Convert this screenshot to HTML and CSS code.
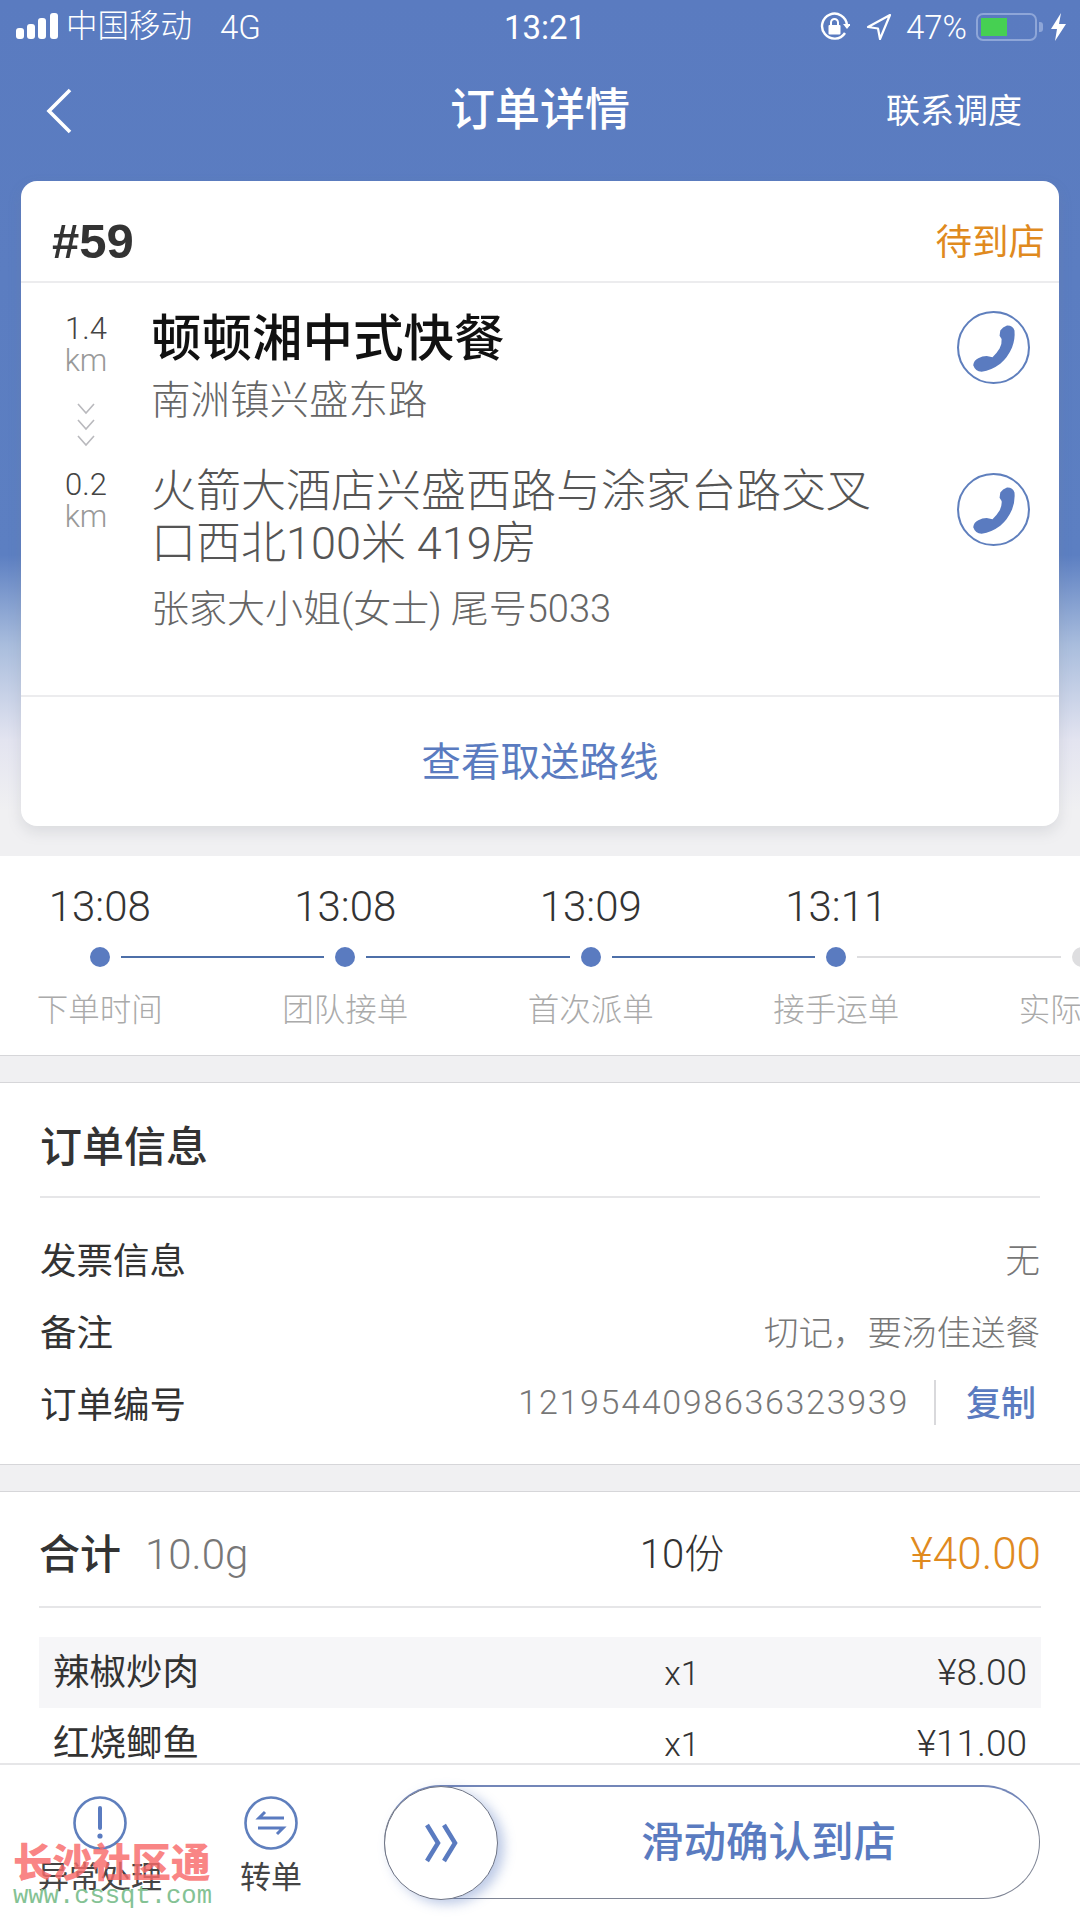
FILE: index.html
```html
<!DOCTYPE html>
<html lang="zh">
<head>
<meta charset="utf-8">
<title>订单详情</title>
<link rel="stylesheet" href="styles.css">
</head>
<body>
<div class="page">
  <main class="scroll">
    <div class="status">
      <div class="status-left">
        <svg class="signal" width="44" height="28" viewBox="0 0 44 28"><rect x="0" y="15" width="8" height="11" rx="3"/><rect x="11" y="11" width="8" height="15" rx="3"/><rect x="22" y="5" width="8" height="21" rx="3"/><rect x="34" y="0" width="8" height="26" rx="3"/></svg>
        <span class="carrier">中国移动</span>
        <span class="net">4G</span>
      </div>
      <div class="clock">13:21</div>
      <div class="status-right">
        <svg class="s-lock" width="30" height="30" viewBox="0 0 30 30"><path d="M25 21A12.5 12.5 0 1 1 27 13" fill="none" stroke="#fff" stroke-width="2.4"/><path d="M23 12h8l-4 5z" fill="#fff"/><rect x="8.5" y="13" width="12" height="9.5" rx="1" fill="#fff"/><path d="M11 13v-2.5a3.5 3.5 0 0 1 7 0V13" fill="none" stroke="#fff" stroke-width="2"/></svg>
        <svg class="s-nav" width="26" height="28" viewBox="0 0 26 28"><path d="M24 2L2 14l10 1.5L14 26z" fill="none" stroke="#fff" stroke-width="2.2" stroke-linejoin="round"/></svg>
        <span class="pct">47%</span>
        <span class="battery"><span class="battery-fill"></span></span>
        <span class="battery-nub"></span>
        <svg class="s-bolt" width="15" height="28" viewBox="0 0 15 28"><path d="M10 0L0 16h6l-2 12 11-17H8z" fill="#fff"/></svg>
      </div>
    </div>

    <header class="nav">
      <svg class="back" width="26" height="46" viewBox="0 0 26 46"><path d="M24 2L3 23l21 21" fill="none" stroke="#fff" stroke-width="3.6"/></svg>
      <h1 class="nav-title">订单详情</h1>
      <div class="nav-action">联系调度</div>
    </header>

    <section class="card">
      <div class="card-head">
        <span class="order-no">#59</span>
        <span class="order-state">待到店</span>
      </div>
      <div class="card-body">
        <div class="stop stop-shop">
          <div class="dist">
            <div class="dist-num">1.4</div>
            <div class="dist-unit">km</div>
            <svg class="chev" width="20" height="46" viewBox="0 0 20 46"><path d="M2 2l8 9 8-9M2 18l8 9 8-9M2 34l8 9 8-9" fill="none" stroke="#b9b9bd" stroke-width="1.6"/></svg>
          </div>
          <div class="stop-text">
            <div class="shop-name">顿顿湘中式快餐</div>
            <div class="shop-addr">南洲镇兴盛东路</div>
          </div>
          <svg class="phone" width="73" height="73" viewBox="0 0 72 72"><circle cx="36" cy="36" r="35" fill="#fff" stroke="#5f7fbd" stroke-width="2"/><path d="M42.7 19.3Q45 15.500 49.300 14.300Q55 14 56.700 19.300Q57.500 28 54.300 36Q50 46 42.700 52Q34 58.500 24.300 60Q18 59.500 16 53.500Q16.500 48.500 21 46.500Q25 44.300 29.300 44.300L35 45.500Q39 42 42 37Q44.500 32 44 27.500L42 24.300z" fill="#5a7bc0"/></svg>
        </div>
        <div class="stop stop-dest">
          <div class="dist">
            <div class="dist-num">0.2</div>
            <div class="dist-unit">km</div>
          </div>
          <div class="stop-text">
            <div class="dest-addr">火箭大酒店兴盛西路与涂家台路交叉口西北100米 419房</div>
            <div class="dest-who">张家大小姐(女士) 尾号5033</div>
          </div>
          <svg class="phone" width="73" height="73" viewBox="0 0 72 72"><circle cx="36" cy="36" r="35" fill="#fff" stroke="#5f7fbd" stroke-width="2"/><path d="M42.7 19.3Q45 15.500 49.300 14.300Q55 14 56.700 19.300Q57.500 28 54.300 36Q50 46 42.700 52Q34 58.500 24.300 60Q18 59.500 16 53.500Q16.500 48.500 21 46.500Q25 44.300 29.300 44.300L35 45.500Q39 42 42 37Q44.500 32 44 27.500L42 24.300z" fill="#5a7bc0"/></svg>
        </div>
      </div>
      <div class="card-foot">查看取送路线</div>
    </section>

    <section class="timeline">
      <div class="track">
        <div class="step first"><div class="t">13:08</div><div class="dotrow"><i class="seg"></i><b class="dot"></b><i class="seg"></i></div><div class="l">下单时间</div></div>
        <div class="step"><div class="t">13:08</div><div class="dotrow"><i class="seg"></i><b class="dot"></b><i class="seg"></i></div><div class="l">团队接单</div></div>
        <div class="step"><div class="t">13:09</div><div class="dotrow"><i class="seg"></i><b class="dot"></b><i class="seg"></i></div><div class="l">首次派单</div></div>
        <div class="step current"><div class="t">13:11</div><div class="dotrow"><i class="seg"></i><b class="dot"></b><i class="seg off"></i></div><div class="l">接手运单</div></div>
        <div class="step pending"><div class="t">&nbsp;</div><div class="dotrow"><i class="seg off"></i><b class="dot off"></b><i class="seg off"></i></div><div class="l">实际到店</div></div>
      </div>
    </section>

    <section class="info">
      <h2 class="info-title">订单信息</h2>
      <div class="info-rows">
        <div class="row"><span class="key">发票信息</span><span class="val">无</span></div>
        <div class="row"><span class="key">备注</span><span class="val">切记，要汤佳送餐</span></div>
        <div class="row"><span class="key">订单编号</span><span class="order-id"><span class="val num">1219544098636323939</span><span class="copy">复制</span></span></div>
      </div>
    </section>

    <section class="goods">
      <div class="total">
        <span class="total-left"><span class="total-key">合计</span><span class="total-weight">10.0g</span></span>
        <span class="total-count">10份</span>
        <span class="total-price">¥40.00</span>
      </div>
      <div class="item alt"><span class="item-name">辣椒炒肉</span><span class="qty">x1</span><span class="price">¥8.00</span></div>
      <div class="item"><span class="item-name">红烧鲫鱼</span><span class="qty">x1</span><span class="price">¥11.00</span></div>
    </section>
  </main>

  <footer class="bar">
    <div class="tool">
      <svg width="54" height="54" viewBox="0 0 54 54"><circle cx="27" cy="27" r="25.500" fill="none" stroke="#5f7fbd" stroke-width="2.600"/><path d="M27 12v20" stroke="#5a7bc0" stroke-width="4" stroke-linecap="round"/><circle cx="27" cy="40" r="2.600" fill="#5a7bc0"/></svg>
      <span class="tool-label">异常处理</span>
    </div>
    <div class="tool">
      <svg width="54" height="54" viewBox="0 0 54 54"><circle cx="27" cy="27" r="25.500" fill="none" stroke="#5f7fbd" stroke-width="2.600"/><path d="M21 16l-6 6h25M33 38l6-6H14" fill="none" stroke="#5a7bc0" stroke-width="3"/></svg>
      <span class="tool-label">转单</span>
    </div>
    <div class="slider">
      <div class="knob"><svg width="34" height="40" viewBox="0 0 34 40"><path d="M3 2l11 18L3 38M20 2l11 18-11 18" fill="none" stroke="#5a7bc0" stroke-width="4.500"/></svg></div>
      <div class="slider-text">滑动确认到店</div>
    </div>
  </footer>

  <div class="mark">
    <div class="mark-cn">长沙社区通</div>
    <div class="mark-url">www.cssqt.com</div>
  </div>
</div>
</body>
</html>
```
FILE: styles.css
```css
* { box-sizing: border-box; }
html, body { margin: 0; padding: 0; }
body {
  width: 1080px;
  height: 1920px;
  font-family: "Roboto", "Noto Sans CJK SC", sans-serif;
  color: #333;
}
.page {
  position: relative;
  width: 1080px;
  height: 1920px;
  overflow: hidden;
  display: flex;
  flex-direction: column;
  background: #f0f0f2;
}
.scroll {
  flex: 1;
  min-height: 0;
  overflow: hidden;
  background: linear-gradient(180deg, #5a7bc0 0, #5c7fc2 555px, #a9bddd 645px, #e3e4f0 740px, #f0f0f2 810px);
}

/* status bar */
.status {
  height: 54px;
  display: grid;
  grid-template-columns: 1fr auto 1fr;
  align-items: center;
  color: #fff;
  font-size: 30px;
  padding: 0 14px 0 16px;
}
.status-left, .status-right { display: flex; align-items: center; }
.status-right { justify-content: flex-end; }
.signal { fill: #fff; margin-right: 6px; }
.carrier { font-size: 31.500px; line-height: 40px; font-weight: 300; }
.net { margin-left: 28px; font-size: 33px; font-weight: 300; }
.clock { font-size: 33px; font-weight: 400; margin-left: 8px; }
.s-lock { margin-right: 16px; }
.s-nav { margin-right: 14px; }
.pct { font-size: 33px; font-weight: 300; margin-right: 9px; }
.battery {
  width: 61px;
  height: 28px;
  border: 2.500px solid #8ea6d8;
  border-radius: 7px;
  padding: 3px;
  display: block;
}
.battery-fill { display: block; width: 26px; height: 100%; background: #46d052; }
.battery-nub { width: 4px; height: 10px; background: #8ea6d8; margin: 0 8px 0 2px; border-radius: 0 3px 3px 0; }

/* nav */
.nav {
  height: 127px;
  padding: 0 58px 14px;
  display: grid;
  grid-template-columns: 1fr auto 1fr;
  align-items: center;
  color: #fff;
}
.back { margin-left: -12px; }
.nav-title { margin: 0; font-size: 45px; line-height: 60px; font-weight: 500; }
.nav-action { justify-self: end; font-size: 34px; line-height: 46px; font-weight: 400; }

/* card */
.card {
  margin: 0 21px;
  height: 645px;
  background: #fff;
  border-radius: 16px;
  box-shadow: 0 6px 14px rgba(120, 125, 140, .18);
  display: flex;
  flex-direction: column;
  overflow: hidden;
}
.card-head {
  height: 102px;
  flex: none;
  display: flex;
  justify-content: space-between;
  align-items: center;
  padding: 20px 14px 0 31px;
  border-bottom: 2px solid #ececee;
}
.order-no { font-size: 49px; font-weight: 700; color: #333; font-family: "Liberation Sans", "Noto Sans CJK SC", sans-serif; }
.order-state { font-size: 36.500px; color: #e08a1e; margin-bottom: 4px; }
.card-body { flex: 1; min-height: 0; padding-top: 23px; }
.stop {
  display: grid;
  grid-template-columns: 130px 1fr 73px;
  padding-right: 29px;
}
.stop-shop { height: 160px; }
.stop-text { padding-top: 3px; }
.stop-dest .stop-text { padding-top: 0; }
.dist { width: 130px; display: flex; flex-direction: column; align-items: center; }
.stop-shop .dist { padding-top: 7px; }
.stop-dest .dist { padding-top: 3px; }
.dist-num { font-size: 31px; line-height: 32px; font-weight: 300; color: #444; }
.dist-unit { font-size: 31px; line-height: 32px; font-weight: 300; color: #999; }
.chev { margin-top: 25px; }
.stop-shop .phone { margin-top: 5px; }
.stop-dest .phone { margin-top: 7px; }
.shop-name { font-size: 50.500px; line-height: 60px; font-weight: 500; color: #111; }
.shop-addr { margin-top: 7px; font-size: 39.500px; line-height: 50px; color: #666; font-weight: 300; }
.dest-addr { max-width: 730px; font-size: 45px; line-height: 52px; color: #555; font-weight: 300; }
.dest-who { margin-top: 14px; font-size: 38px; line-height: 50px; color: #666; font-weight: 300; }
.card-foot {
  flex: none;
  height: 131px;
  padding-bottom: 7px;
  border-top: 2px solid #ececee;
  display: flex;
  align-items: center;
  justify-content: center;
  font-size: 39.500px;
  color: #5a7bc0;
}

/* timeline */
.timeline {
  margin-top: 30px;
  height: 200px;
  background: #fff;
  border-bottom: 1px solid #d6d6d9;
  overflow: hidden;
}
.track { display: flex; margin-left: -23px; padding-top: 28px; width: 1300px; }
.step { flex: none; width: 245.500px; display: flex; flex-direction: column; align-items: center; }
.t { font-size: 42px; line-height: 46px; color: #333; font-weight: 300; }
.dotrow {
  width: 100%;
  height: 20px;
  margin-top: 17px;
  display: grid;
  grid-template-columns: 1fr 20px 1fr;
  column-gap: 11px;
  align-items: center;
}
.seg { height: 2.500px; background: #4d6fa8; }
.seg.off { background: #dedee0; }
.first .seg:first-child { background: transparent; }
.dot { width: 20px; height: 20px; border-radius: 50%; background: #5a7bc0; }
.dot.off { background: #dedee0; }
.l { margin-top: 24px; font-size: 31.500px; line-height: 40px; color: #aaa; font-weight: 300; white-space: nowrap; }

/* info */
.info {
  margin-top: 26px;
  height: 383px;
  padding: 0 40px;
  background: #fff;
  border-top: 1px solid #d6d6d9;
  border-bottom: 1px solid #d6d6d9;
}
.info-title {
  margin: 0;
  height: 115px;
  padding-top: 8px;
  display: flex;
  align-items: center;
  font-size: 42px;
  font-weight: 500;
  color: #333;
  border-bottom: 2px solid #e6e6e8;
}
.info-rows { padding-top: 24px; }
.row { height: 72px; display: flex; justify-content: space-between; align-items: center; font-size: 36.500px; color: #444; font-weight: 300; }
.key { color: #333; font-weight: 400; }
.val { font-size: 34.500px; color: #777; }
.val.num { font-size: 34px; letter-spacing: 1.700px; }
.order-id { display: flex; align-items: center; }
.copy {
  margin-left: 25px;
  padding: 5px 0 0 30px;
  margin-right: 4px;
  border-left: 2px solid #d9d9dc;
  font-size: 35px;
  line-height: 40px;
  color: #5a7bc0;
  font-weight: 500;
}

/* goods */
.goods { margin-top: 26px; padding: 0 39px; background: #fff; border-top: 1px solid #d6d6d9; height: 500px; }
.total, .item { display: grid; grid-template-columns: 543px 200px 1fr; align-items: center; }
.total { height: 116px; padding-top: 4px; border-bottom: 2px solid #e6e6e8; margin-bottom: 29px; }
.total-left { display: flex; align-items: baseline; }
.total-key { font-size: 41px; font-weight: 500; color: #333; }
.total-weight { margin-left: 24px; font-size: 42px; font-weight: 300; color: #777; }
.total-count { text-align: center; font-size: 40px; font-weight: 300; }
.total-price { text-align: right; font-size: 44px; color: #e08a1e; font-weight: 300; padding-top: 6px; }
.item { height: 71px; padding: 0 14px; grid-template-columns: 529px 200px 1fr; font-size: 36.500px; color: #333; }
.item.alt { background: #f6f6f8; }
.item-name { padding-bottom: 7px; }
.qty { text-align: center; font-size: 34px; font-weight: 300; }
.price { text-align: right; font-size: 37px; font-weight: 300; }

/* bottom bar */
.bar {
  flex: none;
  height: 157px;
  padding: 20px 0 0 30px;
  background: #fff;
  border-top: 2px solid #e6e6e8;
  display: flex;
  align-items: flex-start;
  gap: 31px;
  position: relative;
}
.tool { width: 140px; padding-top: 11px; display: flex; flex-direction: column; align-items: center; }
.tool-label { margin-top: 8px; font-size: 31px; line-height: 40px; color: #444; }
.slider {
  margin-left: 12px;
  width: 656px;
  height: 114px;
  border: 1.500px solid #7e8494;
  border-top: 2.500px solid #7386b8;
  border-radius: 57px;
  display: flex;
  align-items: center;
  background: #fff;
}
.knob {
  flex: none;
  width: 114px;
  height: 114px;
  margin-left: -1px;
  border: 1.500px solid #6e7485;
  border-radius: 50%;
  background: #fff;
  box-shadow: 6px 4px 12px rgba(90, 123, 192, .4);
  display: flex;
  align-items: center;
  justify-content: center;
}
.slider-text { flex: 1; text-align: center; font-size: 42.500px; line-height: 60px; font-weight: 500; color: #5a7bc0; }

/* site watermark */
.mark { position: absolute; left: 13px; top: 1837px; pointer-events: none; }
.mark-cn { font-size: 39.500px; line-height: 46px; font-weight: 900; color: rgba(248, 106, 106, .82); white-space: nowrap; font-family: "Noto Sans CJK SC", sans-serif; }
.mark-url { margin-top: -1px; font-family: "Liberation Mono", monospace; font-size: 25.500px; line-height: 30px; color: #84c294; white-space: nowrap; }
```
